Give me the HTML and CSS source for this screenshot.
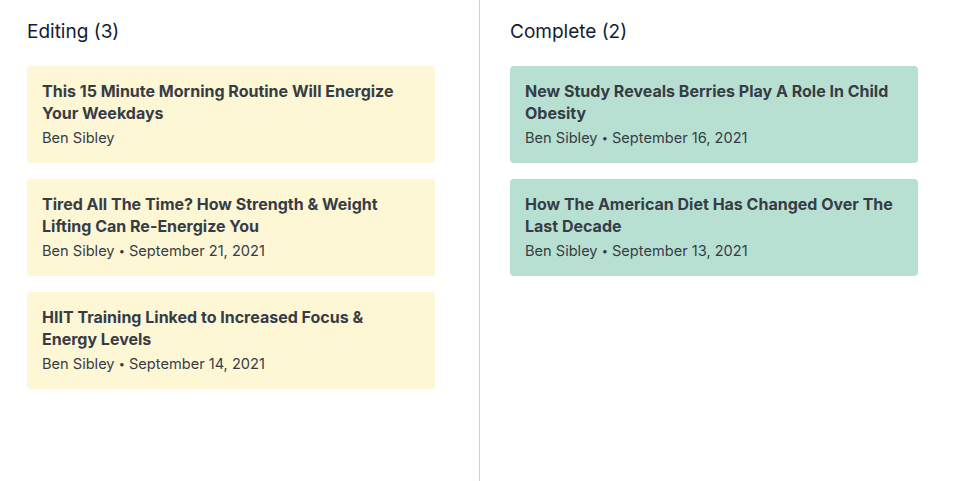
FILE: index.html
```html
<!DOCTYPE html>
<html>
	<head>
		<meta charset="utf-8">
		<title>Board</title>
		<link rel="stylesheet" href="styles.css">
	</head>
	<body>
		<div class="tablero">

			<!-- columna de edicion -->
			<section class="columna columna_editando">
				<h2 class="columna_titulo">Editing (3)</h2>
				<div class="tarjeta tarjeta_amarilla">
					<h3>This 15 Minute Morning Routine Will Energize Your Weekdays</h3>
					<p class="meta">Ben Sibley</p>
				</div>
				<div class="tarjeta tarjeta_amarilla">
					<h3>Tired All The Time? How Strength &amp; Weight Lifting Can Re-Energize You</h3>
					<p class="meta">Ben Sibley <span class="punto">&bull;</span> September 21, 2021</p>
				</div>
				<div class="tarjeta tarjeta_amarilla">
					<h3>HIIT Training Linked to Increased Focus &amp; Energy Levels</h3>
					<p class="meta">Ben Sibley <span class="punto">&bull;</span> September 14, 2021</p>
				</div>
			</section>

			<!-- columna completados -->
			<section class="columna columna_completo">
				<h2 class="columna_titulo">Complete (2)</h2>
				<div class="tarjeta tarjeta_verde">
					<h3>New Study Reveals Berries Play A Role In Child Obesity</h3>
					<p class="meta">Ben Sibley <span class="punto">&bull;</span> September 16, 2021</p>
				</div>
				<div class="tarjeta tarjeta_verde">
					<h3>How The American Diet Has Changed Over The Last Decade</h3>
					<p class="meta">Ben Sibley <span class="punto">&bull;</span> September 13, 2021</p>
				</div>
			</section>

		</div>
	</body>
</html>
```

FILE: styles.css
```css
* {
    margin: 0;
    padding: 0;
    box-sizing: border-box;
}

body {
    font-family: Inter, "Noto Sans", sans-serif;
    background-color: #ffffff;
}

/* tablero de dos columnas */
.tablero {
    display: grid;
    grid-template-columns: 480px 480px;
    height: 481px;
}

.columna {
    display: flex;
    flex-direction: column;
    gap: 16px;
    padding-top: 20px;
}

.columna_editando {
    border-right: 1px solid #d0d0d0;
    padding-left: 27px;
    padding-right: 44px;
}

.columna_completo {
    padding-left: 30px;
    padding-right: 42px;
}

.columna_titulo {
    font-size: 19px;
    font-weight: 400;
    line-height: 24px;
    color: #141b34;
    margin-bottom: 6px;
}

/* tarjetas */
.tarjeta {
    border-radius: 4px;
    padding: 14px 15px 14px;
    color: #363c45;
}

.tarjeta h3 {
    font-size: 16px;
    font-weight: 700;
    line-height: 22px;
}

.tarjeta .meta {
    font-size: 14.6px;
    line-height: 22px;
    margin-top: 3px;
}

.punto {
    font-size: 11px;
    vertical-align: 1px;
}

.tarjeta_amarilla {
    background-color: #fef7d5;
}

.tarjeta_verde {
    background-color: #b8e0d2;
}
```
